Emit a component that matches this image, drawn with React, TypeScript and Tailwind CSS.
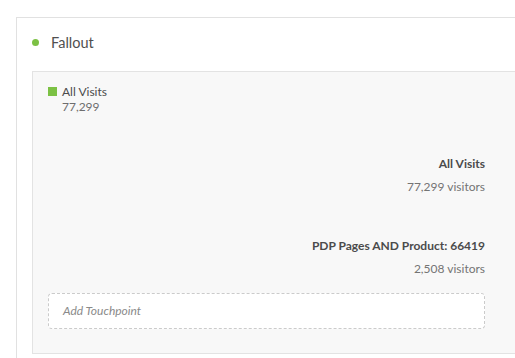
export default function App() {
  return (
    <div className="h-[358px] w-[515px] overflow-hidden bg-white pt-[17px] pl-4 font-['Lato','Open_Sans',sans-serif] text-[#4b4b4b]">
      <div className="h-[400px] w-[560px] border-l border-t border-[#e1e1e1] pl-[15px]">
        <div className="flex h-[53px] items-center gap-[12px] pb-[4px]">
          <span className="h-[7px] w-[7px] rounded-full bg-[#7cc144]" />
          <span className="text-[14.5px] text-[#505050]">Fallout</span>
        </div>
        <div className="h-[283px] w-[520px] border border-[#e3e3e3] bg-[#f8f8f8] pl-[15px] pt-[12px]">
          <div className="w-[437px]">
            <div className="flex items-center gap-[5px] text-[12px] leading-[15px]">
              <span className="h-[9px] w-[9px] bg-[#7cc144]" />
              <span>All Visits</span>
            </div>
            <div className="pl-[14px] text-[12px] leading-[15px] text-[#6e6e6e]">77,299</div>

            <div className="mt-[42px] text-right text-[12px] leading-[16px]">
              <div className="font-bold">All Visits</div>
              <div className="mt-[7px] text-[#747474]">77,299 visitors</div>
              <div className="mt-[43px] font-bold">PDP Pages AND Product: 66419</div>
              <div className="mt-[7px] text-[#747474]">2,508 visitors</div>
            </div>

            <div className="mt-[16px] flex h-[36px] items-center rounded-[4px] border border-dashed border-[#cbcbcb] bg-white pl-[14px] text-[12px] italic text-[#8a8a8a]">
              Add Touchpoint
            </div>
          </div>
        </div>
      </div>
    </div>
  );
}
